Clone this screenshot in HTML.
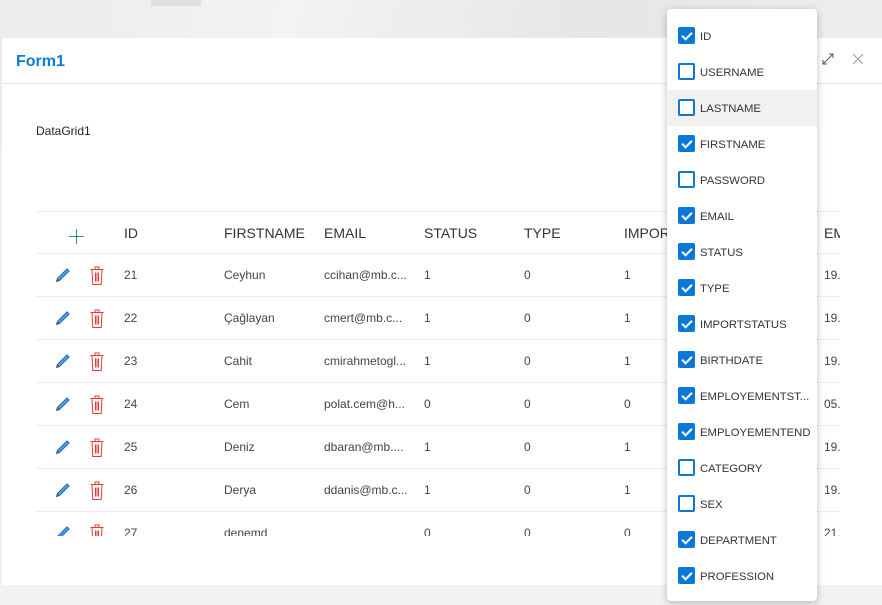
<!DOCTYPE html>
<html><head><meta charset="utf-8"><style>
*{box-sizing:border-box;margin:0;padding:0}
body{width:882px;height:605px;overflow:hidden;font-family:"Segoe UI","Liberation Sans","DejaVu Sans",sans-serif;background:linear-gradient(100deg,#ececec 0%,#f3f3f3 30%,#e6e6e6 60%,#f0f0f0 100%);position:relative}
.bot{position:absolute;left:0;top:585px;width:882px;height:20px;background:#f3f2f1}
.modal{position:absolute;left:2px;top:38px;width:880px;height:547px;background:#fff}
.title{position:absolute;left:14px;top:15px;font-size:16px;color:#0a7bd6;font-weight:600}
.hline{position:absolute;left:0;top:45px;width:880px;height:1px;background:#e4e4e4}
.dg{position:absolute;left:34px;top:86px;font-size:12px;color:#222}
.grid{position:absolute;left:34px;top:173px;width:804px;height:325px;overflow:hidden}
.row{position:absolute;left:0;width:804px;height:43px;border-top:1px solid #ececec}
.c{position:absolute;top:14px;font-size:12px;color:#444;white-space:nowrap}
.h .c{font-size:14px;color:#333;top:13px}
.ico{position:absolute;top:12px}
.dd{position:absolute;left:667px;top:9px;width:150px;height:592px;background:#fff;border-radius:4px;box-shadow:0 2px 8px rgba(0,0,0,.25)}
.it{position:absolute;left:0;width:150px;height:36px}
.it.hov{background:#f3f2f1}
.cb{position:absolute;left:11px;top:9px;width:17px;height:17px;border:2px solid #0a78d4;border-radius:2px;background:#fff}
.cb.on{background:#0a78d4}
.cb.on:after{content:"";position:absolute;left:4px;top:1px;width:4px;height:8px;border:solid #fff;border-width:0 2px 2px 0;transform:rotate(45deg)}
.lb{position:absolute;left:33px;top:13px;font-size:11.3px;color:#333}
</style></head><body>
<div class="bot"></div>
<div style="position:absolute;left:151px;top:0;width:50px;height:6px;background:#e0e0e0"></div>
<div class="modal">
<div class="title">Form1</div>
<svg style="position:absolute;left:820px;top:15px" width="12" height="12" viewBox="0 0 12 12" fill="none" stroke="#555" stroke-width="1"><path d="M1 11L11 1M7 1h4v4M1 7v4h4"/></svg>
<svg style="position:absolute;left:851px;top:16px" width="10" height="10" viewBox="0 0 10 10" stroke="#999" stroke-width="1"><path d="M0 0L10 10M10 0L0 10"/></svg>
<div class="hline"></div>
<div class="dg">DataGrid1</div>
<div class="grid">
<div class="row h" style="top:0">
<svg class="ico" style="left:33px;top:17px" width="15" height="15" viewBox="0 0 15 15" stroke="#2a9a55" stroke-width="1"><path d="M7.5 0v15M0 7.5h15"/></svg>
<div class="c" style="left:88px">ID</div><div class="c" style="left:188px">FIRSTNAME</div><div class="c" style="left:288px">EMAIL</div><div class="c" style="left:388px">STATUS</div><div class="c" style="left:488px">TYPE</div><div class="c" style="left:588px">IMPORTSTATUS</div><div class="c" style="left:788px">EM</div>
</div>
</div>
</div>
<div class="dd">
<div class="it" style="top:9px"><div class="cb on"></div><div class="lb">ID</div></div>
<div class="it" style="top:45px"><div class="cb"></div><div class="lb">USERNAME</div></div>
<div class="it hov" style="top:81px"><div class="cb"></div><div class="lb">LASTNAME</div></div>
<div class="it" style="top:117px"><div class="cb on"></div><div class="lb">FIRSTNAME</div></div>
<div class="it" style="top:153px"><div class="cb"></div><div class="lb">PASSWORD</div></div>
<div class="it" style="top:189px"><div class="cb on"></div><div class="lb">EMAIL</div></div>
<div class="it" style="top:225px"><div class="cb on"></div><div class="lb">STATUS</div></div>
<div class="it" style="top:261px"><div class="cb on"></div><div class="lb">TYPE</div></div>
<div class="it" style="top:297px"><div class="cb on"></div><div class="lb">IMPORTSTATUS</div></div>
<div class="it" style="top:333px"><div class="cb on"></div><div class="lb">BIRTHDATE</div></div>
<div class="it" style="top:369px"><div class="cb on"></div><div class="lb">EMPLOYEMENTST...</div></div>
<div class="it" style="top:405px"><div class="cb on"></div><div class="lb">EMPLOYEMENTEND</div></div>
<div class="it" style="top:441px"><div class="cb"></div><div class="lb">CATEGORY</div></div>
<div class="it" style="top:477px"><div class="cb"></div><div class="lb">SEX</div></div>
<div class="it" style="top:513px"><div class="cb on"></div><div class="lb">DEPARTMENT</div></div>
<div class="it" style="top:549px"><div class="cb on"></div><div class="lb">PROFESSION</div></div>
</div>
<script>
var d=[["21","Ceyhun","ccihan@mb.c...","1","0","1","19.0"],["22","Çağlayan","cmert@mb.c...","1","0","1","19.0"],["23","Cahit","cmirahmetogl...","1","0","1","19.0"],["24","Cem","polat.cem@h...","0","0","0","05.0"],["25","Deniz","dbaran@mb....","1","0","1","19.0"],["26","Derya","ddanis@mb.c...","1","0","1","19.0"],["27","denemd","","0","0","0","21.0"]];
var g=document.querySelector('.grid'),x=[88,188,288,388,488,588,788];
var pen='<svg class="ico" style="left:18px" width="18" height="18" viewBox="0 0 18 18"><path d="M2.5 15.5l.8-3L13 2.8l2.2 2.2-9.7 9.7z" fill="#4a9be8" stroke="#1d5fa8" stroke-width=".8"/><path d="M2.5 15.5l.8-3 2.2 2.2z" fill="#555"/></svg>';
var tr='<svg class="ico" style="left:54px" width="14" height="19" viewBox="0 0 14 19" fill="none" stroke="#e53935" stroke-width="1"><path d="M0.5 3.5h13M5 3.5V1h4v2.5M2 3.5l.8 15h8.4l.8-15M5.5 6.5v9M7 6.5v9M8.5 6.5v9"/></svg>';
d.forEach(function(r,i){var e=document.createElement('div');e.className='row';e.style.top=(42+i*43)+'px';var h=pen+tr;r.forEach(function(v,j){h+='<div class="c" style="left:'+x[j]+'px">'+v+'</div>'});e.innerHTML=h;g.appendChild(e)});
</script>
</body></html>
